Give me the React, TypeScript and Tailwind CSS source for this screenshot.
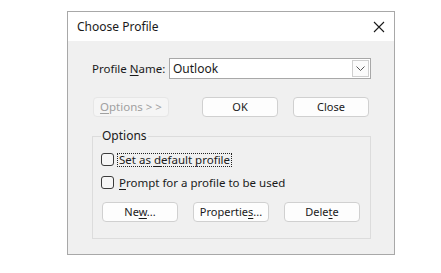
const font = { fontFamily: '"Noto Sans", "Open Sans", sans-serif' };

const btn =
  'h-[20px] w-[76px] flex items-center justify-center text-[11px] text-[#1a1a1a] bg-[#fdfdfd] border border-[#d0d0d0] rounded-[4px]';

function U({ children }: { children: string }) {
  return <span className="underline underline-offset-[2px]">{children}</span>;
}

function Check({ children, focused }: { children: React.ReactNode; focused?: boolean }) {
  return (
    <div className="flex items-center h-[13px]">
      <div className="w-[13px] h-[13px] rounded-[3px] border border-[#3b3b3b] bg-[#f6f6f6] shrink-0" />
      <span
        className={`ml-[3px] px-[1px] h-[14px] flex items-center text-[11.5px] text-[#1a1a1a] border ${
          focused ? 'border-dotted border-[#222]' : 'border-transparent'
        }`}
      >
        <span>{children}</span>
      </span>
    </div>
  );
}

export default function App() {
  return (
    <div className="w-[441px] h-[273px] bg-white pt-[11px] pl-[67px]" style={font}>
      <div className="w-[328px] h-[244px] border border-[#a8a8a8] flex flex-col">
        <div className="h-[29px] bg-white flex items-center justify-between pl-[9px] pr-[8px] shrink-0">
          <span className="text-[12px] text-[#1a1a1a]">Choose Profile</span>
          <svg width="12" height="12" viewBox="0 0 12 12" className="mr-[1px]">
            <path d="M1 1 L11 11 M11 1 L1 11" stroke="#1a1a1a" strokeWidth="1.1" />
          </svg>
        </div>

        <div className="flex-1 bg-[#f0f0f0] pl-[24px] pr-[23px]">
          <div className="mt-[17px] flex items-center h-[21px]">
            <span className="w-[77px] text-[11.5px] text-[#1a1a1a]">
              Profile <U>N</U>ame:
            </span>
            <div className="flex-1 h-[21px] border border-[#a8a8a8] bg-white flex items-center justify-between pl-[3px] pr-[1px]">
              <span className="text-[12px] text-[#1a1a1a]">Outlook</span>
              <div className="w-[17px] h-[17px] border border-[#cfcfcf] bg-[#fbfbfb] flex items-center justify-center">
                <svg width="9" height="5" viewBox="0 0 9 5">
                  <path d="M0.5 0.5 L4.5 4.5 L8.5 0.5" stroke="#555" strokeWidth="1" fill="none" />
                </svg>
              </div>
            </div>
          </div>

          <div className="mt-[18px] flex h-[20px]">
            <div className="ml-[1px] h-[20px] w-[76px] flex items-center justify-center text-[11.5px] text-[#a0a0a0] bg-[#f5f5f5] border border-[#e6e6e6] rounded-[4px]">
              <span>
                <U>O</U>ptions &gt; &gt;
              </span>
            </div>
            <div className={`${btn} ml-[33px] text-[11.5px]`}>OK</div>
            <div className={`${btn} ml-[15px] text-[11.5px]`}>Close</div>
          </div>

          <div className="mt-[19px] h-[103px] border border-[#dcdcdc] pl-[8px]">
            <div className="-mt-[9px] w-fit px-[1px] bg-[#f0f0f0] text-[12px] leading-[16px] text-[#1a1a1a]">
              Options
            </div>
            <div className="mt-[9px] flex flex-col gap-[10px]">
              <Check focused>
                Set as <U>d</U>efault profile
              </Check>
              <Check>
                <U>P</U>rompt for a profile to be used
              </Check>
            </div>
            <div className="mt-[13px] flex gap-[15px] ml-[1px]">
              <div className={btn}>
                <span>
                  Ne<U>w</U>...
                </span>
              </div>
              <div className={btn}>
                <span>
                  Propertie<U>s</U>...
                </span>
              </div>
              <div className={btn}>
                <span>
                  Dele<U>t</U>e
                </span>
              </div>
            </div>
          </div>
        </div>
      </div>
    </div>
  );
}
